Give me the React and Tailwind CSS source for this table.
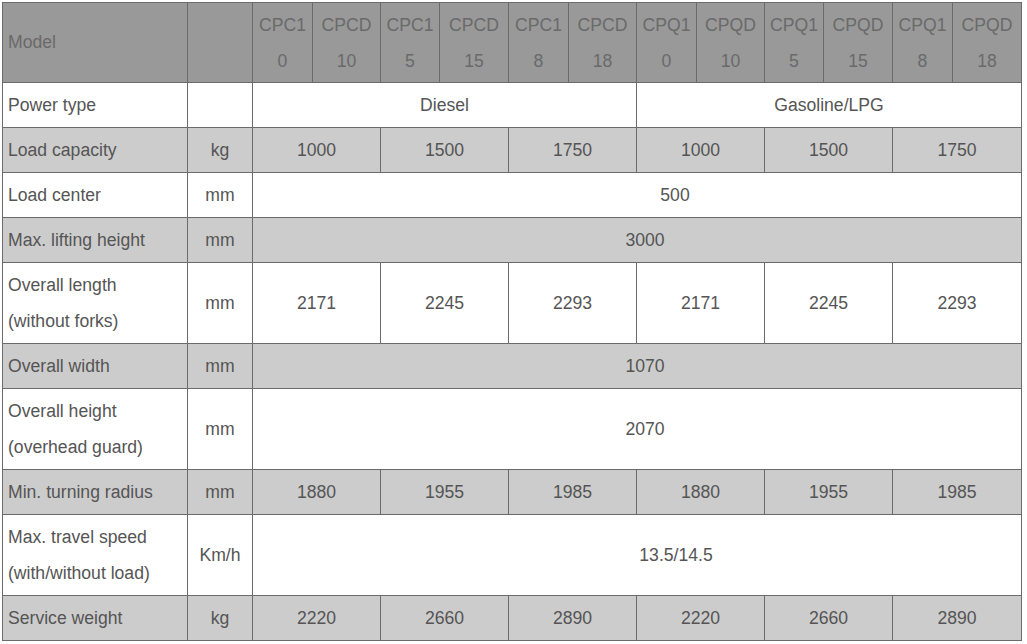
export default function App() {
  const models = [
    ["CPC1", "0"], ["CPCD", "10"], ["CPC1", "5"], ["CPCD", "15"], ["CPC1", "8"], ["CPCD", "18"],
    ["CPQ1", "0"], ["CPQD", "10"], ["CPQ1", "5"], ["CPQD", "15"], ["CPQ1", "8"], ["CPQD", "18"],
  ];
  const rows = [
    { label: ["Power type"], unit: "", type: "power", bg: "bg-white" },
    { label: ["Load capacity"], unit: "kg", vals: ["1000", "1500", "1750", "1000", "1500", "1750"], bg: "bg-[#cccccc]" },
    { label: ["Load center"], unit: "mm", all: "500", pad: "pl-[76px]", bg: "bg-white" },
    { label: ["Max. lifting height"], unit: "mm", all: "3000", pad: "pl-[16px]", bg: "bg-[#cccccc]" },
    { label: ["Overall length", "(without forks)"], unit: "mm", vals: ["2171", "2245", "2293", "2171", "2245", "2293"], bg: "bg-white" },
    { label: ["Overall width"], unit: "mm", all: "1070", pad: "pl-[16px]", bg: "bg-[#cccccc]" },
    { label: ["Overall height", "(overhead guard)"], unit: "mm", all: "2070", pad: "pl-[16px]", bg: "bg-white" },
    { label: ["Min. turning radius"], unit: "mm", vals: ["1880", "1955", "1985", "1880", "1955", "1985"], bg: "bg-[#cccccc]" },
    { label: ["Max. travel speed", "(with/without load)"], unit: "Km/h", all: "13.5/14.5", pad: "pl-[78px]", bg: "bg-white" },
    { label: ["Service weight"], unit: "kg", vals: ["2220", "2660", "2890", "2220", "2660", "2890"], bg: "bg-[#cccccc]" },
  ];
  const cell = "flex items-center justify-center text-center";
  return (
    <div className="min-h-screen bg-white pl-[2px] pt-[2px]" style={{ fontFamily: '"Liberation Sans", Arial, sans-serif' }}>
      <div className="grid w-fit gap-px bg-[#6b6b6b] p-px text-[17.6px] text-[#555555] grid-cols-[184px_64px_59px_67px_58px_68px_59px_67px_59px_67px_58px_68px_59px_68px] grid-rows-[79px_44px_44px_44px_44px_80px_44px_80px_44px_80px_44px]">
        <div className="flex items-center bg-[#999999] pl-[5px] text-[#6a6a6a]">Model</div>
        <div className="bg-[#999999]"></div>
        {models.map((m, i) => (
          <div key={i} className={`${cell} flex-col bg-[#999999] leading-[36px] text-[#6a6a6a]`}>
            <span>{m[0]}</span>
            <span>{m[1]}</span>
          </div>
        ))}
        {rows.map((r, ri) => (
          <Row key={ri} r={r} cell={cell} />
        ))}
      </div>
    </div>
  );
}

function Row({ r, cell }) {
  return (
    <>
      <div className={`flex flex-col justify-center pl-[5px] leading-[36px] ${r.bg}`}>
        {r.label.map((l, i) => (
          <span key={i}>{l}</span>
        ))}
      </div>
      <div className={`${cell} ${r.bg}`}>{r.unit}</div>
      {r.type === "power" && (
        <>
          <div className={`${cell} col-span-6 ${r.bg}`}>Diesel</div>
          <div className={`${cell} col-span-6 ${r.bg}`}>Gasoline/LPG</div>
        </>
      )}
      {r.all && <div className={`${cell} col-span-12 ${r.pad} ${r.bg}`}>{r.all}</div>}
      {r.vals &&
        r.vals.map((v, i) => (
          <div key={i} className={`${cell} col-span-2 ${r.bg}`}>
            {v}
          </div>
        ))}
    </>
  );
}
